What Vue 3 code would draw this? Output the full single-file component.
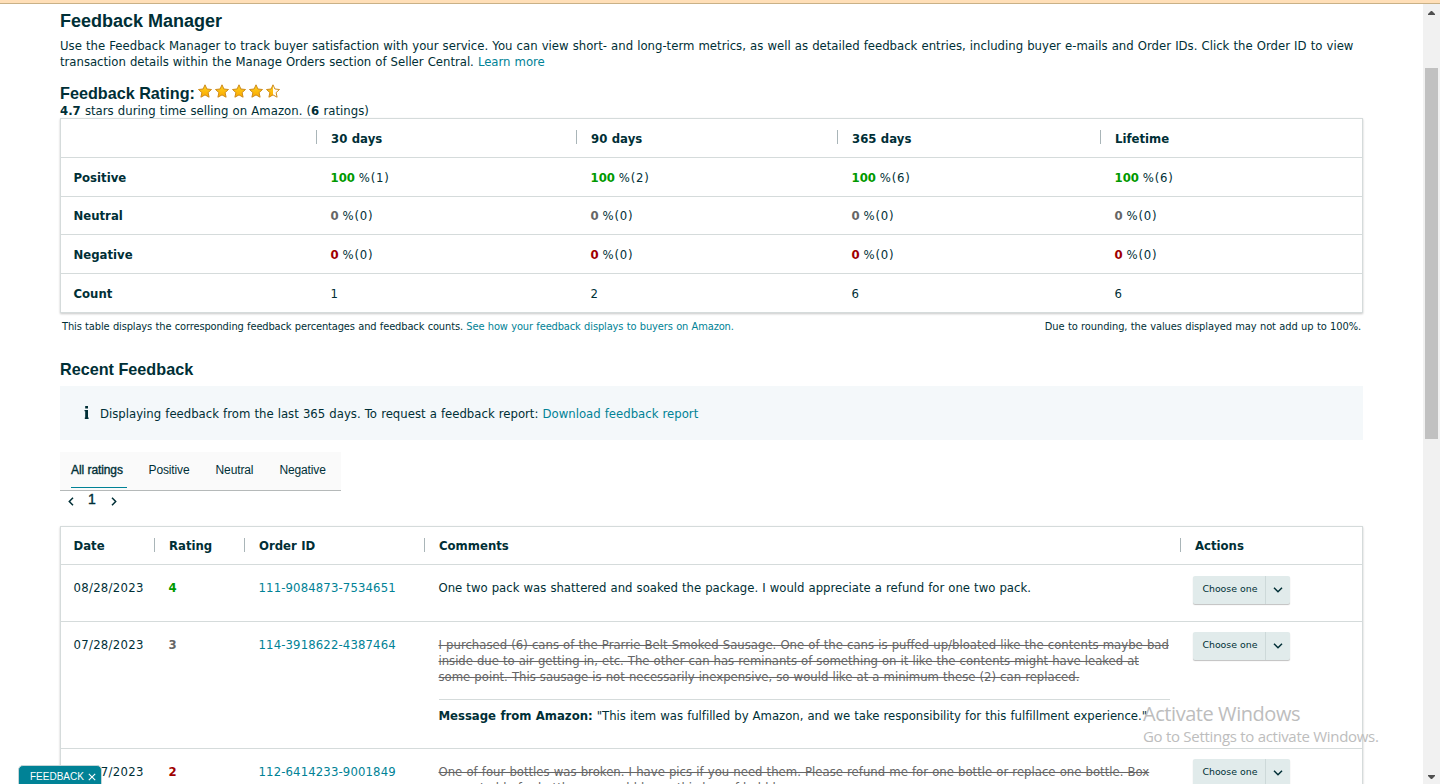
<script setup>
const periods = ['30 days', '90 days', '365 days', 'Lifetime']
const metrics = [
  { label: 'Positive', tone: 'good', values: [['100', '1'], ['100', '2'], ['100', '6'], ['100', '6']] },
  { label: 'Neutral', tone: 'neutral', values: [['0', '0'], ['0', '0'], ['0', '0'], ['0', '0']] },
  { label: 'Negative', tone: 'bad', values: [['0', '0'], ['0', '0'], ['0', '0'], ['0', '0']] },
]
const counts = ['1', '2', '6', '6']
const tabs = ['All ratings', 'Positive', 'Neutral', 'Negative']
const headings = ['Date', 'Rating', 'Order ID', 'Comments', 'Actions']
const entries = [
  {
    date: '08/28/2023', rating: 4, tone: 'good', order: '111-9084873-7534651', struck: false,
    lines: ['One two pack was shattered and soaked the package. I would appreciate a refund for one two pack.'],
  },
  {
    date: '07/28/2023', rating: 3, tone: 'neutral', order: '114-3918622-4387464', struck: true,
    lines: [
      'I purchased (6) cans of the Prarrie Belt Smoked Sausage. One of the cans is puffed up/bloated like the contents maybe bad',
      'inside due to air getting in, etc. The other can has reminants of something on it like the contents might have leaked at',
      'some point. This sausage is not necessarily inexpensive, so would like at a minimum these (2) can replaced.',
    ],
    message: '"This item was fulfilled by Amazon, and we take responsibility for this fulfillment experience."',
  },
  {
    date: '07/27/2023', rating: 2, tone: 'bad', order: '112-6414233-9001849', struck: true,
    lines: [
      'One of four bottles was broken. I have pics if you need them. Please refund me for one bottle or replace one bottle. Box',
      'was not able for bottles, or would leave this box of bubbles.',
    ],
  },
]
const star = 'M7 .8 8.9 5l4.6.5-3.4 3.1 1 4.6L7 10.9l-4.1 2.3 1-4.6L.5 5.5 5.1 5z'
</script>

<template>
  <div class="screen">
    <div class="notice"></div>
    <div class="view">
      <main class="page">
        <h1>Feedback Manager</h1>
        <p class="intro">
          <span>Use the Feedback Manager to track buyer satisfaction with your service. You can view short- and long-term metrics, as well as detailed feedback entries, including buyer e-mails and Order IDs. Click the Order ID to view</span><br>
          <span class="tight">transaction details within the Manage Orders section of Seller Central. <a>Learn more</a></span>
        </p>
        <div class="rating-head">
          <h2>Feedback Rating:</h2>
          <span class="stars">
            <svg v-for="n in 5" :key="n" width="14" height="14" viewBox="0 0 14 14">
              <defs>
                <linearGradient id="gold" x1="0" y1="0" x2="0" y2="1">
                  <stop offset="0" stop-color="#ffd21c" /><stop offset="1" stop-color="#fba900" />
                </linearGradient>
                <clipPath id="half"><rect width="7" height="14" /></clipPath>
              </defs>
              <path :d="star" :fill="n === 5 ? '#fffdf6' : 'url(#gold)'" />
              <path v-if="n === 5" :d="star" fill="url(#gold)" clip-path="url(#half)" />
              <path :d="star" fill="none" stroke="#cd8b1c" stroke-width="1" stroke-linejoin="round" />
            </svg>
          </span>
        </div>
        <p class="summary"><b>4.7</b> stars during time selling on Amazon. (<b>6</b> ratings)</p>

        <section class="table metrics">
          <div class="row head">
            <div></div>
            <div v-for="p in periods" :key="p" class="divided"><b>{{ p }}</b></div>
          </div>
          <div v-for="m in metrics" :key="m.label" class="row" :class="m.label.toLowerCase()">
            <div><b>{{ m.label }}</b></div>
            <div v-for="(v, i) in m.values" :key="i"><b :class="m.tone">{{ v[0] }}</b><span class="pct">&nbsp;%({{ v[1] }})</span></div>
          </div>
          <div class="row count">
            <div><b>Count</b></div>
            <div v-for="(c, i) in counts" :key="i">{{ c }}</div>
          </div>
        </section>
        <div class="notes">
          <span>This table displays the corresponding feedback percentages and feedback counts. <a>See how your feedback displays to buyers on Amazon.</a></span>
          <span class="rounding">Due to rounding, the values displayed may not add up to 100%.</span>
        </div>

        <h2 class="recent">Recent Feedback</h2>
        <div class="info">
          <svg width="5" height="13" viewBox="0 0 5 13" fill="#002f36"><path d="M1.2 0h2.8v2.6H1.2zM.5 4h3.5v7.6h.6V13H.8v-1.4h.4V5.2H.5z" /></svg>
          <span>Displaying feedback from the last 365 days. To request a feedback report: <a>Download feedback report</a></span>
        </div>
        <nav class="tabs">
          <span v-for="(t, i) in tabs" :key="t" :class="{ active: i === 0 }">{{ t }}</span>
        </nav>
        <div class="pager">
          <svg width="6" height="9" viewBox="0 0 6 9"><path d="M5 .7 1.3 4.5 5 8.3" /></svg>
          <span>1</span>
          <svg width="6" height="9" viewBox="0 0 6 9"><path d="M1 .7 4.7 4.5 1 8.3" /></svg>
        </div>

        <section class="table feedback">
          <div class="row head">
            <div v-for="(h, i) in headings" :key="h" :class="{ divided: i > 0 }"><b>{{ h }}</b></div>
          </div>
          <div v-for="(e, k) in entries" :key="e.order" class="row entry" :class="'entry' + k">
            <div class="date">{{ e.date }}</div>
            <div><b :class="e.tone">{{ e.rating }}</b></div>
            <div class="order"><a>{{ e.order }}</a></div>
            <div class="comment">
              <p v-for="l in e.lines" :key="l"><span :class="{ struck: e.struck }">{{ l }}</span></p>
              <p v-if="e.message" class="message"><b>Message from Amazon:</b> <span>{{ e.message }}</span></p>
            </div>
            <div class="action">
              <button>
                <span>Choose one</span>
                <i><svg width="10" height="6" viewBox="0 0 10 6"><path d="M1 .8 5 4.7 9 .8" /></svg></i>
              </button>
            </div>
          </div>
        </section>
      </main>
      <aside class="scrollbar">
        <svg width="7" height="4" viewBox="0 0 7 4"><path d="M3 0h1l3 3v1H0V3z" /></svg>
        <div class="thumb"></div>
        <svg width="7" height="4" viewBox="0 0 7 4"><path d="M3 4h1l3-3V0H0v1z" /></svg>
      </aside>
    </div>
    <div class="watermark"><div>Activate Windows</div><p>Go to Settings to activate Windows.</p></div>
    <div class="badge">
      <span>FEEDBACK</span>
      <svg width="8" height="8" viewBox="0 0 8 8"><path d="M.8.8l6.4 6.4M7.2.8.8 7.2" /></svg>
    </div>
  </div>
</template>

<style>
html, body { margin: 0; overflow: hidden; background: #fff; }
</style>

<style scoped>
* { box-sizing: border-box; }
h1, h2, p { margin: 0; }
.screen {
  position: relative; width: 1440px; height: 784px; overflow: hidden; background: #fff;
  font: 11.7px/16px Verdana, "DejaVu Sans", sans-serif; color: #002f36; word-spacing: .4px;
  display: flex; flex-direction: column; white-space: nowrap;
}
a { color: #008296; }
.notice { height: 4px; flex: none; background: #ffdfb8; border-bottom: 1px solid #c9b187; }
.view { display: flex; flex: 1; min-height: 0; justify-content: space-between; }
.page { width: 1303px; margin-left: 60px; }
h1 { font: bold 18px/22px "Liberation Sans", Arial, sans-serif; margin-top: 6px; word-spacing: 0; }
h2 { font: bold 16.2px/20px "Liberation Sans", Arial, sans-serif; word-spacing: 0; }
.intro { margin-top: 6px; height: 32px; }
.tight { letter-spacing: -.018px; }
.rating-head { display: flex; margin-top: 14px; height: 18px; }
.rating-head h2 { margin-top: -1px; }
.stars { display: flex; gap: 3px; margin: 0 0 0 3px; }
.summary { height: 15px; margin-top: 1px; letter-spacing: .02px; }
.good { color: #090; }
.neutral b.neutral, .entry .neutral { color: #666; }
.bad { color: #a00000; }

.table { border: 1px solid #d5dbdb; box-shadow: 0 1px 2px rgba(0, 0, 0, .22); background: #fff; }
.row { display: grid; border-bottom: 1px solid #d5dbdb; }
.row:last-child { border-bottom: 0; }
.metrics { height: 195px; }
.metrics .row { grid-template-columns: 255px 260px 261px 263px 1fr; height: 39px; align-items: center; }
.metrics .row.neutral { height: 38px; }
.metrics .row.count { height: 38px; }
.metrics .head > div, .metrics .positive > div, .metrics .negative > div, .metrics .count > div { padding-top: 2px; }
.row > div { padding-left: 14.5px; }
.row > div:first-child { padding-left: 12.5px; }
.row > .divided { position: relative; padding-left: 15px; }
.divided::before { content: ""; position: absolute; left: 0; top: 0; width: 1px; height: 14px; background: #a9b5b8; }
.metrics .divided::before { top: 1px; }
.pct { letter-spacing: .8px; word-spacing: -.6px; }
.notes { display: flex; justify-content: space-between; padding: 0 2px; margin-top: 6px; font-size: 9.9px; letter-spacing: -.125px; }
.rounding { letter-spacing: -.09px; }
.recent { margin-top: 24px; }
.info { margin-top: 7px; height: 54px; background: #f4f8fa; display: flex; align-items: center; gap: 11px; padding: 1px 0 0 24px; }
.info svg { margin-top: -2px; }
.tabs {
  display: flex; width: 281px; height: 39px; margin-top: 12px; padding-left: 11px; gap: 26px;
  background: #fafafa; border-bottom: 1px solid #b5b9b9;
  font: 12px/36px "Liberation Sans", Arial, sans-serif; letter-spacing: -.12px;
}
.tabs span { height: 36px; }
.tabs .active { width: 56px; margin-right: -4.5px; -webkit-text-stroke: .35px #002f36; border-bottom: 1px solid #008296; }
.pager { display: flex; align-items: flex-start; padding-left: 8px; height: 35px; }
.pager svg { margin-top: 6px; fill: none; stroke: #002f36; stroke-width: 1.5; }
.pager span { margin: 0 15px 0 14px; font: 14px/16px "Liberation Sans", Arial, sans-serif; -webkit-text-stroke: .4px; }
.feedback .row { grid-template-columns: 93px 90px 180px 756px 1fr; }
.feedback .head { height: 38px; align-items: center; }
.entry0 { height: 57px; }
.entry1 { height: 127px; }
.entry2 { height: 127px; }
.entry > div { padding-top: 15px; }
.date { letter-spacing: .28px; }
.order { letter-spacing: .13px; }
.comment { padding-right: 10.5px; }
.entry0 .comment p { letter-spacing: -.015px; }
.entry1 .comment p:nth-child(2) { letter-spacing: -.033px; }
.entry1 .comment p:nth-child(3) { letter-spacing: -.015px; }
.struck { color: #666; text-decoration: line-through; }
.message { margin-top: 14px; padding-top: 8px; border-top: 1px solid #d5dbdb; letter-spacing: -.025px; }
.row > .action { padding: 10px 0 0 13.4px; }
.row.entry0 > .action { padding-top: 11px; }
button {
  display: flex; width: 97px; height: 28px; padding: 0; border: 0; border-radius: 2px; background: #e1ebeb;
  box-shadow: 0 1px 1px rgba(0, 0, 0, .25); color: #002f36; font: 9.4px/26px Verdana, "DejaVu Sans", sans-serif;
}
button span { width: 72px; padding-left: 9px; text-align: left; }
button i { width: 25px; border-left: 1px solid #cdd9d9; height: 28px; display: flex; justify-content: center; align-items: center; }
button svg { fill: none; stroke: #002f36; stroke-width: 1.5; }
.scrollbar { width: 17px; background: #f1f1f1; display: flex; flex-direction: column; align-items: center; padding: 7px 0 5px; }
.scrollbar path { fill: #505050; }
.thumb { width: 13px; height: 371px; margin: 53px 0 auto; background: #c1c1c1; }
.watermark { position: absolute; left: 1143px; top: 701px; color: #bdbdbd; font: 20px/26px "Open Sans", sans-serif; letter-spacing: -.44px; word-spacing: 0; }
.watermark p { font-size: 15px; line-height: 20px; margin-top: -1px; letter-spacing: -.29px; }
.badge {
  position: absolute; left: 18px; top: 765px; width: 84px; height: 24px; padding-left: 11px; display: flex; gap: 4px;
  background: #008296; border: 1px solid #c5d5d7; border-radius: 5px 5px 0 0; color: #fff;
  font: 10px/22px "Liberation Sans", Arial, sans-serif;
}
.badge svg { margin-top: 7px; fill: none; stroke: #fff; stroke-width: 1.1; }
</style>
